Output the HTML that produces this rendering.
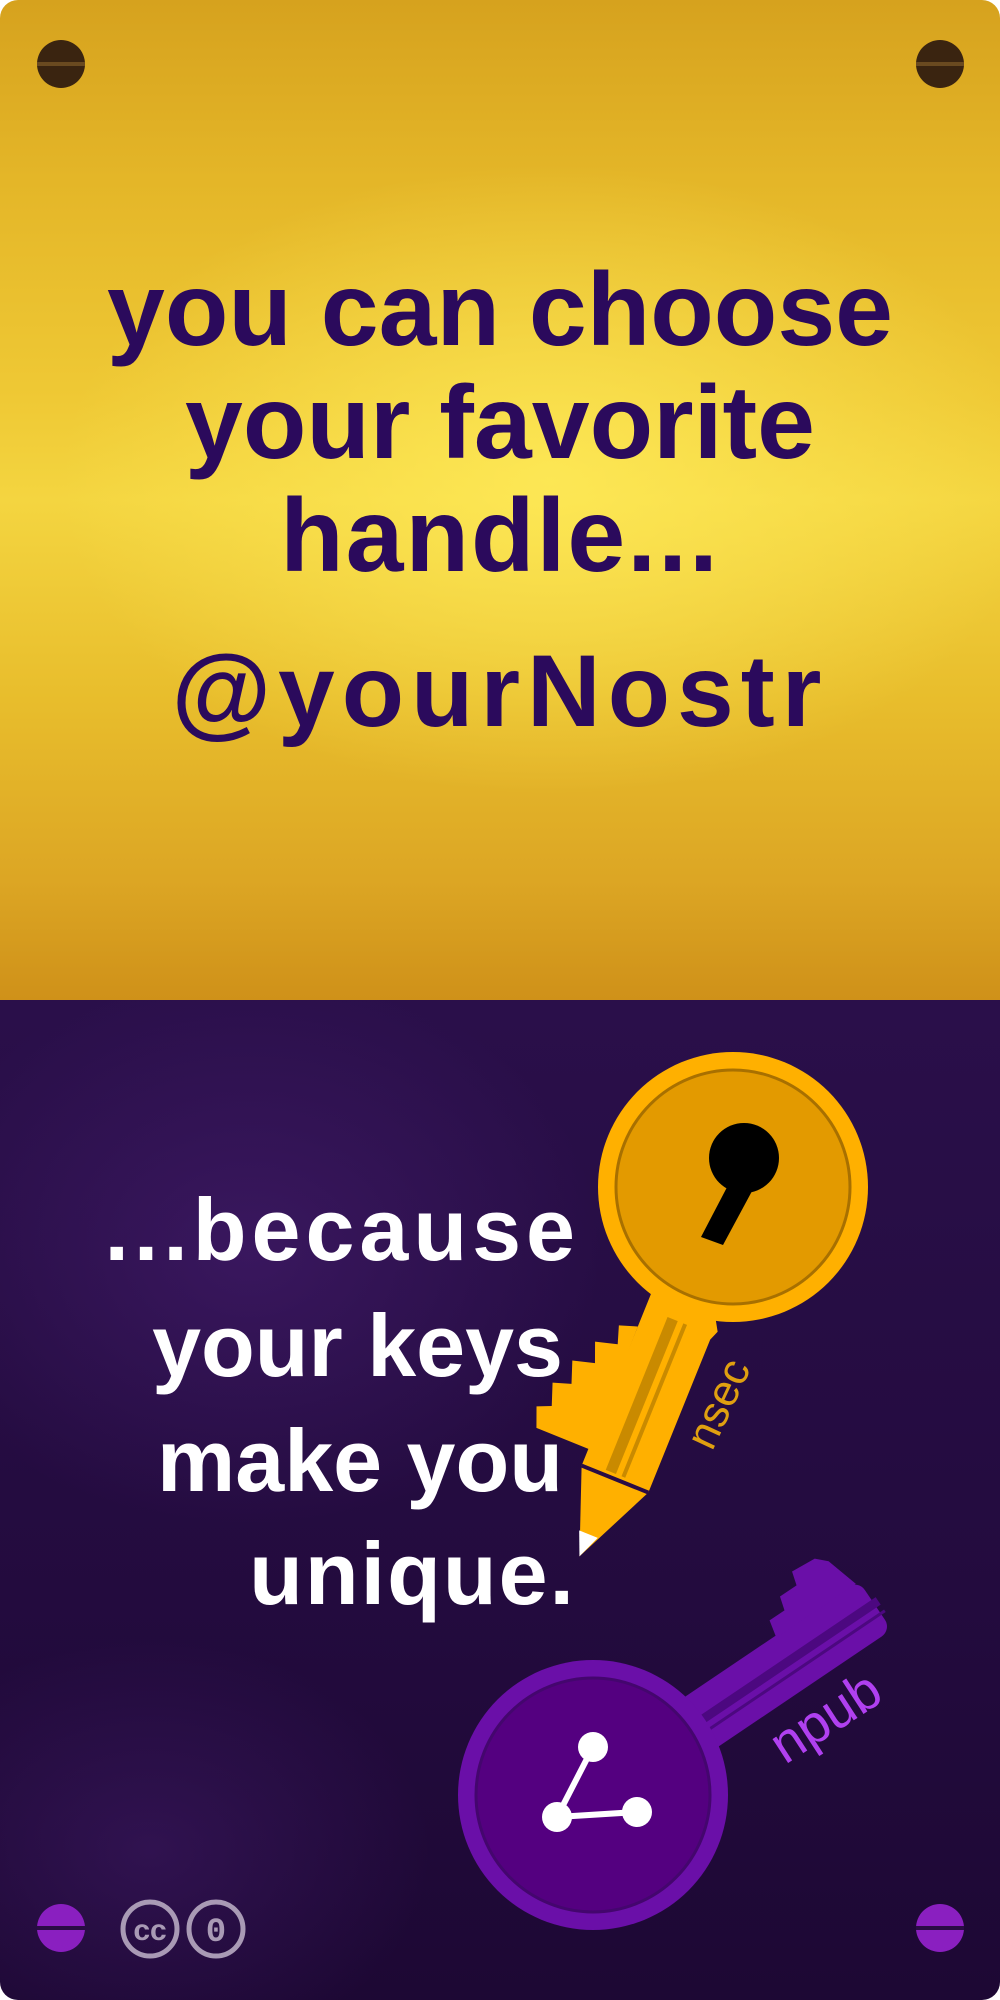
<!DOCTYPE html>
<html><head><meta charset="utf-8"><style>
html,body{margin:0;padding:0;background:#fff;}
#c{position:relative;width:1000px;height:2000px;overflow:hidden;border-radius:18px;}
#gold{position:absolute;left:0;top:0;width:1000px;height:1000px;
background:radial-gradient(ellipse 70% 45% at 55% 48%,rgba(255,236,90,.8),rgba(255,220,60,0) 70%),
linear-gradient(180deg,#d6a21e 0%,#e4b628 18%,#efc935 40%,#f4d540 50%,#e8bd2c 70%,#dca624 88%,#cf9119 100%);}
#purp{position:absolute;left:0;top:1000px;width:1000px;height:1000px;
background:radial-gradient(ellipse 50% 40% at 25% 25%,rgba(80,35,125,.45),rgba(0,0,0,0) 70%),
radial-gradient(ellipse 40% 30% at 15% 85%,rgba(80,35,125,.35),rgba(0,0,0,0) 70%),
linear-gradient(180deg,#2a0f4a,#230b3e 60%,#1d0834);}
.gt{position:absolute;left:0;width:1000px;text-align:center;font-family:"Liberation Sans",sans-serif;font-weight:bold;color:#2b0a5c;font-size:104px;line-height:1;}
.wt{position:absolute;text-align:right;font-family:"Liberation Sans",sans-serif;font-weight:bold;color:#fff;font-size:88px;line-height:1;white-space:nowrap;}
</style></head><body><div id="c">
<div id="gold"></div><div id="purp"></div>
<div class="gt" style="top:258px">you can choose</div>
<div class="gt" style="top:371px">your favorite</div>
<div class="gt" style="top:484px;letter-spacing:2px">handle...</div>
<div class="gt" style="top:640px;letter-spacing:7px;font-size:102px">@yourNostr</div>
<div class="wt" style="top:1186px;right:420px;letter-spacing:5px">...because</div>
<div class="wt" style="top:1302px;right:437px">your keys</div>
<div class="wt" style="top:1417px;right:437px">make you</div>
<div class="wt" style="top:1530px;right:424px;letter-spacing:2px">unique.</div>
<svg width="1000" height="2000" style="position:absolute;left:0;top:0">
<circle cx="61" cy="64" r="24" fill="#3a2410"/><rect x="37" y="62" width="48" height="4" fill="#6a4a20"/>
<circle cx="940" cy="64" r="24" fill="#3a2410"/><rect x="916" y="62" width="48" height="4" fill="#6a4a20"/>
<circle cx="61" cy="1928" r="24" fill="#8a1fc0"/><rect x="37" y="1926" width="48" height="4" fill="#2a0c45"/>
<circle cx="940" cy="1928" r="24" fill="#8a1fc0"/><rect x="916" y="1926" width="48" height="4" fill="#2a0c45"/>
<g fill="none" stroke="#a99ab5" stroke-width="5"><circle cx="150" cy="1929" r="27"/><circle cx="216" cy="1929" r="27"/></g>
<text x="150" y="1940" text-anchor="middle" font-family="Liberation Sans,sans-serif" font-weight="bold" font-size="30" fill="#a99ab5">cc</text>
<text x="216" y="1941" text-anchor="middle" font-family="Liberation Mono,monospace" font-weight="bold" font-size="34" fill="#a99ab5">0</text>
<g transform="translate(733,1187) rotate(22)">
<path d="M-36 100 L36 100 L34 130 L40 140 L36 150 L36 315 L-36 315 Z" fill="#ffb000"/>
<path d="M-36 165 l-18 6 l6 18 l-22 6 l8 20 l-22 6 l8 22 l-18 6 l8 22 l-14 6 l8 20 l58 0 z" fill="#ffb000"/>
<rect x="-12" y="145" width="11" height="165" fill="#c98a00"/>
<rect x="5" y="145" width="4" height="165" fill="#c98a00"/>
<path d="M-36 315 L36 315 L-4 400 Z" fill="#ffb000"/>
<line x1="-36" y1="315" x2="36" y2="315" stroke="#2a0c45" stroke-width="4"/>
<path d="M-14 376 L6 376 L-4 400 Z" fill="#fff"/>
</g>
<circle cx="733" cy="1187" r="135" fill="#ffb000"/>
<circle cx="733" cy="1187" r="117" fill="#e39a00" stroke="#a87000" stroke-width="3"/>
<circle cx="744" cy="1158" r="35" fill="#000"/>
<path d="M736 1170 L758 1180 L723 1245 L701 1237 Z" fill="#000"/>
<text transform="translate(712,1452) rotate(-65)" font-family="Liberation Sans,sans-serif" font-size="44" fill="#e0a010">nsec</text>
<g transform="translate(593,1795) rotate(-34)">
<rect x="100" y="-30" width="240" height="60" rx="12" fill="#6a0fa8"/>
<path d="M240 -28 l4 -18 l18 0 l4 -14 l20 0 l4 -14 l26 2 l10 10 l10 34 z" fill="#6a0fa8"/>
<rect x="120" y="-6" width="225" height="9" fill="#4c0880"/>
<rect x="125" y="9" width="220" height="3" fill="#4c0880"/>
</g>
<circle cx="593" cy="1795" r="135" fill="#6a0fa8"/>
<circle cx="593" cy="1795" r="117" fill="#540080" stroke="#44066e" stroke-width="3"/>
<g stroke="#fff" stroke-width="6"><line x1="593" y1="1747" x2="557" y2="1817"/><line x1="557" y1="1817" x2="637" y2="1812"/></g>
<g fill="#fff"><circle cx="593" cy="1747" r="15"/><circle cx="557" cy="1817" r="15"/><circle cx="637" cy="1812" r="15"/></g>
<text transform="translate(785,1765) rotate(-33)" font-family="Liberation Sans,sans-serif" font-size="54" fill="#b040f0">npub</text>
</svg>
</div></body></html>
